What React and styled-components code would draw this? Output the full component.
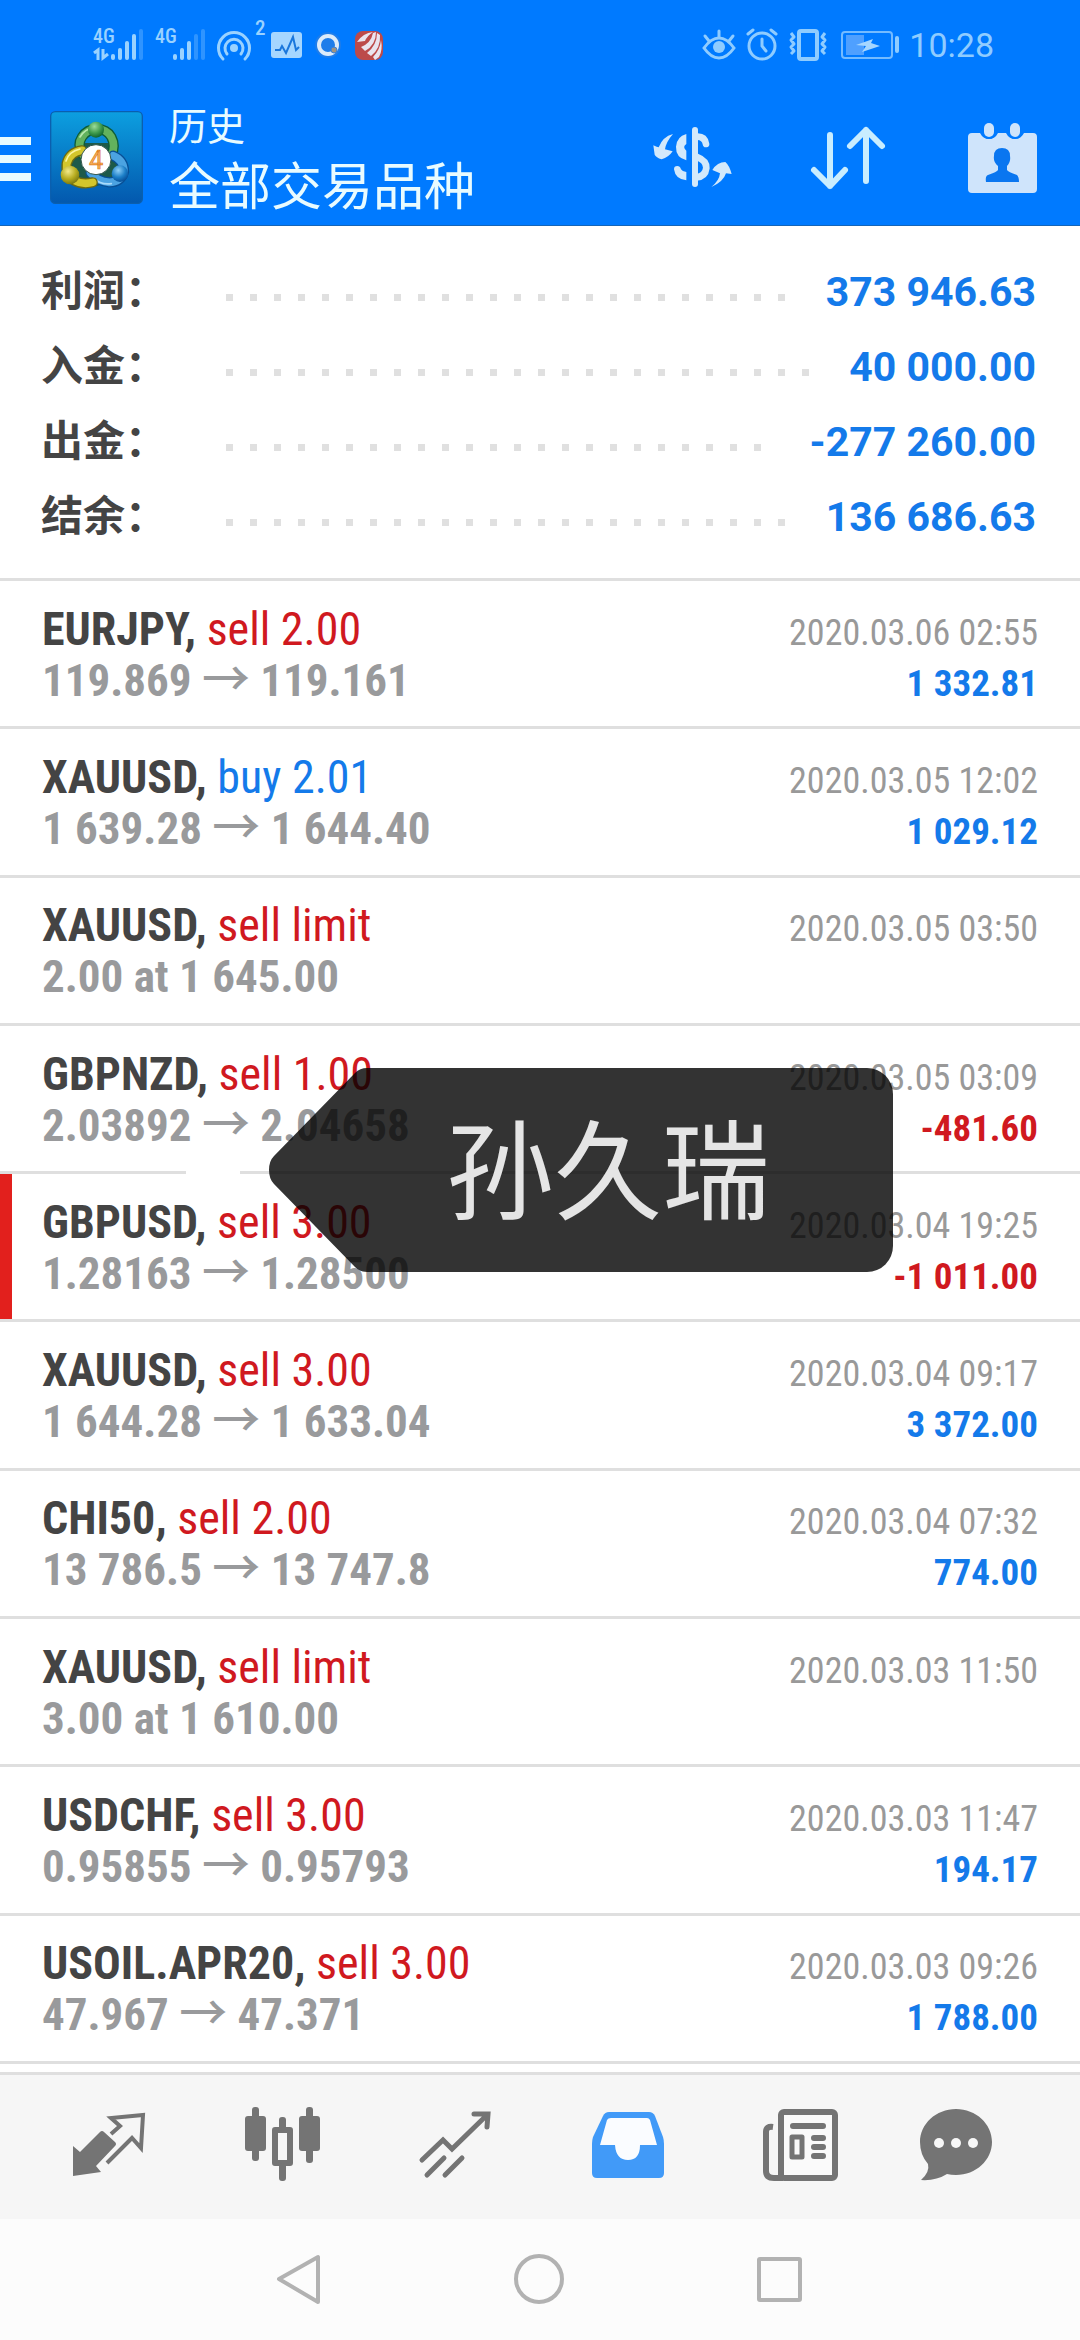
import styled, { createGlobalStyle } from "styled-components";

const totals = [
    { label: "利润：", value: "373 946.63" },
    { label: "入金：", value: "40 000.00" },
    { label: "出金：", value: "-277 260.00" },
    { label: "结余：", value: "136 686.63" },
];

const trades = [
    { id: 1, symbol: "EURJPY", side: "sell", volume: "2.00", open: "119.869", close: "119.161", time: "2020.03.06 02:55", profit: "1 332.81" },
    { id: 2, symbol: "XAUUSD", side: "buy", volume: "2.01", open: "1 639.28", close: "1 644.40", time: "2020.03.05 12:02", profit: "1 029.12" },
    { id: 3, symbol: "XAUUSD", side: "sell", volume: "limit", order: "2.00 at 1 645.00", time: "2020.03.05 03:50" },
    { id: 4, symbol: "GBPNZD", side: "sell", volume: "1.00", open: "2.03892", close: "2.04658", time: "2020.03.05 03:09", profit: "-481.60" },
    { id: 5, symbol: "GBPUSD", side: "sell", volume: "3.00", open: "1.28163", close: "1.28500", time: "2020.03.04 19:25", profit: "-1 011.00", marked: true, note: "孙久瑞" },
    { id: 6, symbol: "XAUUSD", side: "sell", volume: "3.00", open: "1 644.28", close: "1 633.04", time: "2020.03.04 09:17", profit: "3 372.00" },
    { id: 7, symbol: "CHI50", side: "sell", volume: "2.00", open: "13 786.5", close: "13 747.8", time: "2020.03.04 07:32", profit: "774.00" },
    { id: 8, symbol: "XAUUSD", side: "sell", volume: "limit", order: "3.00 at 1 610.00", time: "2020.03.03 11:50" },
    { id: 9, symbol: "USDCHF", side: "sell", volume: "3.00", open: "0.95855", close: "0.95793", time: "2020.03.03 11:47", profit: "194.17" },
    { id: 10, symbol: "USOIL.APR20", side: "sell", volume: "3.00", open: "47.967", close: "47.371", time: "2020.03.03 09:26", profit: "1 788.00" },
];

function App() {
    return (
        <>
        <GlobalStyle />
        <Screen>
            <Header>
                <StatusBar />
                <AppBar />
            </Header>
            <Main>
                <Totals>
                    {totals.map((item) => (
                        <TotalRow key={item.label}>
                            <TotalLabel>{item.label}</TotalLabel>
                            <Dots />
                            <TotalValue>{item.value}</TotalValue>
                        </TotalRow>
                    ))}
                </Totals>
                <TradeList>
                    {trades.map((trade) => (
                        <Trade key={trade.id} trade={trade} />
                    ))}
                </TradeList>
            </Main>
            <TabBar />
            <SystemBar />
        </Screen>
        </>
    )
}

export default App

function Trade({ trade }) {
    return (
        <TradeRow $marked={trade.marked}>
            <TradeLine>
                <Symbol>
                    {trade.symbol}, <Side $side={trade.side}>{trade.side} {trade.volume}</Side>
                </Symbol>
                <Time>{trade.time}</Time>
            </TradeLine>
            <TradeLine>
                <Prices>
                    {trade.order || <>{trade.open} <Arrow>→</Arrow> {trade.close}</>}
                </Prices>
                {trade.profit && (
                    <Profit $loss={trade.profit.startsWith("-")}>{trade.profit}</Profit>
                )}
            </TradeLine>
            {trade.note && (
                <Note>
                    <NoteTip viewBox="0 0 98 204" aria-hidden="true">
                        <path d="M98 0Q91 0 86 5L5 88Q0 93 0 102Q0 111 5 116L86 199Q91 204 98 204Z" />
                    </NoteTip>
                    <NoteText>{trade.note}</NoteText>
                </Note>
            )}
        </TradeRow>
    )
}

function SignalIcon({ level, data }) {
    const bars = [[18, 26], [25, 20], [32, 13], [39, 6], [46, 1]];
    return (
        <svg width="50" height="34" viewBox="0 0 50 34" aria-hidden="true">
            <IconText x="0" y="15" $size={20}>4G</IconText>
            {data && <path d="M1 25L5 22V32M10 21V30L15 26" stroke="#9ad2ff" strokeWidth="3" fill="none" />}
            {bars.map(([x, y], i) => (
                <rect key={x} x={x} y={y} width="4" height={32 - y} rx="2" fill="#9ad2ff" opacity={i < level ? 1 : 0.3} />
            ))}
        </svg>
    )
}

function StatusBar() {
    return (
        <Status>
            <StatusGroup $gap={12}>
                <SignalIcon level={4} data />
                <SignalIcon level={3} />
                <svg width="42" height="34" viewBox="0 0 42 34" aria-hidden="true">
                    <g fill="none" stroke="#9ad2ff" strokeWidth="3" strokeLinecap="round">
                        <path d="M6 31A15.500 15.500 0 1 1 28 31" />
                        <path d="M10 26A9 9 0 1 1 24 26" />
                    </g>
                    <circle cx="17" cy="20" r="4" fill="#9ad2ff" />
                    <path d="M17 24L13 32H21Z" fill="#007aff" />
                    <IconText x="38" y="7" $size={21}>2</IconText>
                </svg>
                <svg width="31" height="34" viewBox="0 0 31 34" aria-hidden="true">
                    <rect y="4" width="31" height="26" rx="3" fill="#a5d6ff" />
                    <path d="M4 22H9L11 18L15 25L22 9L25 22L28 19" fill="none" stroke="#1a77dc" strokeWidth="2" />
                </svg>
                <svg width="27" height="34" viewBox="0 0 27 34" aria-hidden="true">
                    <circle cx="14" cy="17" r="13" fill="#3b80d6" opacity=".5" />
                    <circle cx="14" cy="17" r="9" fill="none" stroke="#dcebfa" strokeWidth="4" />
                    <circle cx="20" cy="22" r="3" fill="#9c9484" stroke="#3b80d6" strokeWidth="1" />
                </svg>
                <svg width="30" height="34" viewBox="0 0 30 34" aria-hidden="true">
                    <rect x="2" y="3" width="28" height="29" rx="8" fill="#bc4a4a" />
                    <g fill="#e9e4ee">
                        <path d="M4 14Q10 5 20 4Q14 8 12 13Z" />
                        <path d="M8 19Q18 15 20 5L23 4Q23 17 12 23Z" />
                        <path d="M14 25Q24 17 24 5L27 7Q28 20 18 28Z" />
                        <path d="M20 29Q27 22 28 12Q30 22 26 29L22 32Z" />
                    </g>
                </svg>
            </StatusGroup>
            <StatusGroup $gap={10}>
                <svg width="35" height="34" viewBox="0 0 35 34" aria-hidden="true">
                    <g fill="none" stroke="#8fccff" strokeWidth="3" strokeLinecap="round">
                        <path d="M2 20Q9 10 17 10T32 20Q25 30 17 30T2 20Z" />
                        <path d="M17 9V3M7 13L3 8M27 13L31 8" />
                    </g>
                    <circle cx="17" cy="19" r="6" fill="#8fccff" />
                </svg>
                <svg width="32" height="34" viewBox="0 0 32 34" aria-hidden="true">
                    <g fill="none" stroke="#8fccff" strokeWidth="3" strokeLinecap="round">
                        <circle cx="15" cy="18" r="13" />
                        <path d="M15 11V18L19 23M1 6L6 2M29 6L24 2" />
                    </g>
                </svg>
                <svg width="40" height="34" viewBox="0 0 40 34" aria-hidden="true">
                    <g fill="none" stroke="#8fccff" strokeLinejoin="round">
                        <rect x="10" y="3" width="18" height="28" rx="2" strokeWidth="4" />
                        <path d="M2 5L5 9L2 12L5 16L2 19L5 23L2 26M36 5L33 9L36 12L33 16L36 19L33 23L36 26" strokeWidth="3" />
                    </g>
                </svg>
                <svg width="60" height="34" viewBox="0 0 60 34" aria-hidden="true">
                    <rect x="3" y="4" width="50" height="26" rx="3" fill="none" stroke="#74bbff" strokeWidth="2" />
                    <rect x="7" y="7" width="18" height="20" fill="#4fa0ff" />
                    <path d="M17 17L34 11L32 15L41 18L23 24L27 18Z" fill="#a5d6ff" />
                    <rect x="56" y="8" width="4" height="17" rx="2" fill="#8fccff" />
                </svg>
                <Clock>10:28</Clock>
            </StatusGroup>
        </Status>
    )
}

function LogoIcon() {
    return (
        <svg width="93" height="93" viewBox="0 0 279 279" aria-hidden="true">
            <defs>
                <linearGradient id="tile" x1="0" y1="0" x2="0" y2="1">
                    <stop offset="0" stopColor="#0c9fe0" />
                    <stop offset="1" stopColor="#0358ae" />
                </linearGradient>
                <radialGradient id="green" cx=".4" cy=".3" r=".7">
                    <stop offset="0" stopColor="#9ddc9a" />
                    <stop offset=".6" stopColor="#3f9b4d" />
                    <stop offset="1" stopColor="#12662f" />
                </radialGradient>
                <radialGradient id="yellow" cx=".4" cy=".3" r=".7">
                    <stop offset="0" stopColor="#f3ea8a" />
                    <stop offset=".6" stopColor="#b7ac1f" />
                    <stop offset="1" stopColor="#7b7a12" />
                </radialGradient>
                <radialGradient id="blue" cx=".4" cy=".3" r=".7">
                    <stop offset="0" stopColor="#8fd0f8" />
                    <stop offset=".6" stopColor="#1c7fc8" />
                    <stop offset="1" stopColor="#07509a" />
                </radialGradient>
            </defs>
            <rect x="2" y="2" width="275" height="275" rx="14" fill="url(#tile)" stroke="#0b5fae" strokeWidth="4" />
            <path d="M88 96L190 96L226 190L140 226L52 190Z" fill="#1d5a4a" />
            <g fill="none" strokeLinecap="round">
                <path d="M98 130Q80 102 96 78Q112 54 140 54Q170 54 184 78Q198 104 184 134" stroke="#0e5c38" strokeWidth="31" />
                <path d="M98 130Q80 102 96 78Q112 54 140 54Q170 54 184 78Q198 104 184 134" stroke="#63b25d" strokeWidth="23" />
                <path d="M90 78Q104 54 132 50" stroke="#b8e8ae" strokeWidth="5" />
                <path d="M190 134Q222 148 222 182Q212 214 178 214Q140 210 122 186" stroke="#084f95" strokeWidth="31" />
                <path d="M190 134Q222 148 222 182Q212 214 178 214Q140 210 122 186" stroke="#4ba3e2" strokeWidth="23" />
                <path d="M132 202Q152 222 184 218" stroke="#a8dafa" strokeWidth="5" />
                <path d="M96 118Q58 124 50 158Q46 190 72 208Q98 222 128 214" stroke="#6d6a10" strokeWidth="31" />
                <path d="M96 118Q58 124 50 158Q46 190 72 208Q98 222 128 214" stroke="#d3c62c" strokeWidth="23" />
                <path d="M48 150Q56 122 90 114" stroke="#fbf5a0" strokeWidth="5" />
            </g>
            <circle cx="138" cy="56" r="24" fill="url(#green)" />
            <circle cx="60" cy="192" r="28" fill="url(#yellow)" />
            <circle cx="210" cy="188" r="25" fill="url(#blue)" />
            <circle cx="138" cy="146" r="45" fill="#fff" stroke="#32564a" strokeWidth="3" />
            <LogoText x="138" y="173">4</LogoText>
        </svg>
    )
}

function AppBar() {
    return (
        <Bar>
            <MenuButton aria-label="menu">
                <svg width="31" height="46" viewBox="0 0 31 46" fill="#e8fbff">
                    <path d="M0 2H31V10H0ZM0 20H31V28H0ZM0 38H31V46H0Z" />
                </svg>
            </MenuButton>
            <LogoIcon />
            <Titles>
                <Caption>历史</Caption>
                <Title>全部交易品种</Title>
            </Titles>
            <BarButton aria-label="currency">
                <svg width="110" height="95" viewBox="-10 0 330 285">
                    <g fill="#d3e9fb">
                        <path d="M95 72Q74 96 71 118L94 124Q82 142 61 148Q44 142 40 134L36 106Q48 112 52 112Q64 80 95 72Z" />
                        <path d="M210 231Q234 212 236 190L213 180Q228 156 252 156Q264 166 271 192L254 190Q246 216 210 231Z" />
                        <path d="M135 72V102Q122 110 135 122V151Q103 142 104 110Q106 80 135 72Z" />
                        <path d="M98 178Q98 168 108 168Q116 168 119 178Q124 186 135 186V211Q102 208 98 178Z" />
                    </g>
                    <g fill="none" stroke="#d3e9fb" strokeLinecap="round">
                        <path d="M161 60V222" strokeWidth="18" />
                        <path d="M165 80Q190 78 194 102M165 140Q196 152 195 174Q192 200 165 202" strokeWidth="20" />
                    </g>
                </svg>
            </BarButton>
            <BarButton aria-label="sort">
                <svg width="74" height="64" viewBox="0 0 74 64" fill="none" stroke="#c9edff" strokeWidth="6" strokeLinecap="round" strokeLinejoin="round">
                    <path d="M19 9V60M3 44L19 60L34 44M55 55V4M39 20L55 4L71 20" />
                </svg>
            </BarButton>
            <BarButton aria-label="period">
                <svg width="69" height="72" viewBox="0 0 69 72">
                    <path d="M4 11H12Q15 17 21 17T30 11H38Q41 17 47 17T56 11H65Q69 11 69 15V67Q69 71 65 71H4Q0 71 0 67V15Q0 11 4 11Z" fill="#cfe4fb" />
                    <rect x="14" y="-1" width="14" height="18" rx="7" fill="#007aff" />
                    <rect x="40" y="-1" width="14" height="18" rx="7" fill="#007aff" />
                    <rect x="16" y="1" width="10" height="14" rx="5" fill="#cfe4fb" />
                    <rect x="42" y="1" width="10" height="14" rx="5" fill="#cfe4fb" />
                    <path d="M34 26Q42 26 42 34Q43 40 39 44V48Q40 50 49 53Q51 55 51 60H18Q17 54 20 53Q29 50 30 48V44Q25 40 26 34Q26 26 34 26Z" fill="#0a76f0" />
                </svg>
            </BarButton>
        </Bar>
    )
}

function TabBar() {
    return (
        <Tabs aria-label="sections">
            <Tab aria-label="quotes">
                <svg width="72" height="64" viewBox="0 0 72 64">
                    <path d="M0 33L7 39L27 19Q29 17 31 19L42 29Q44 31 42 33L23 53L28 59L0 63Z" fill="currentColor" />
                    <path d="M38 21L47 13L38 5L70 2L68 35L59 25L34 50" fill="none" stroke="currentColor" strokeWidth="4" />
                </svg>
            </Tab>
            <Tab aria-label="charts">
                <svg width="75" height="76" viewBox="0 0 75 76" fill="currentColor">
                    <rect y="9" width="21" height="35" rx="3" />
                    <rect x="7" width="7" height="54" rx="3" />
                    <path d="M30 20H45Q48 20 48 23V56Q48 59 45 59H30Q27 59 27 56V23Q27 20 30 20ZM33 26V53H42V26Z" />
                    <rect x="34" y="10" width="7" height="14" rx="3" />
                    <rect x="34" y="56" width="7" height="18" rx="3" />
                    <rect x="54" y="9" width="21" height="35" rx="3" />
                    <rect x="61" width="7" height="56" rx="3" />
                </svg>
            </Tab>
            <Tab aria-label="trade">
                <svg width="72" height="68" viewBox="0 0 72 68" fill="none" stroke="currentColor" strokeWidth="5" strokeLinecap="round">
                    <path d="M3 49L24 29L33 38L68 4M55 3H69L68 16M8 64L25 47M26 64L43 47" />
                </svg>
            </Tab>
            <Tab aria-label="history" aria-current="page">
                <svg width="72" height="66" viewBox="0 0 72 66">
                    <path d="M17 0H57Q61 0 63 4L71 25Q72 28 72 32V61Q72 66 67 66H5Q0 66 0 61V32Q0 28 1 25L11 4Q13 0 17 0Z" fill="currentColor" />
                    <path d="M19 6H55Q57 6 58 8L65 33H48Q48 48 36 48T23 33H8L15 8Q16 6 19 6Z" fill="#fafcff" />
                </svg>
            </Tab>
            <Tab aria-label="news">
                <svg width="75" height="72" viewBox="0 0 75 72">
                    <rect x="18" y="3" width="54" height="66" rx="3" fill="#fafafa" stroke="currentColor" strokeWidth="6" />
                    <path d="M10 18Q3 17 3 23V62Q3 69 11 69H20" fill="none" stroke="currentColor" strokeWidth="6" />
                    <rect x="29" y="28" width="10" height="20" fill="none" stroke="currentColor" strokeWidth="5" strokeLinejoin="round" />
                    <path d="M30 17H60M51 29H60M51 38H60M51 47H60" stroke="currentColor" strokeWidth="6" strokeLinecap="round" />
                </svg>
            </Tab>
            <Tab aria-label="chat">
                <svg width="72" height="72" viewBox="0 0 72 72">
                    <path d="M36 0C56 0 72 15 72 33S56 66 36 66Q31 66 27 65Q16 72 1 71Q10 63 8 55Q0 46 0 33C0 15 16 0 36 0Z" fill="currentColor" />
                    <g fill="#f7f7f7">
                        <circle cx="19" cy="34" r="5" />
                        <circle cx="36" cy="34" r="5" />
                        <circle cx="53" cy="34" r="5" />
                    </g>
                </svg>
            </Tab>
        </Tabs>
    )
}

function SystemBar() {
    return (
        <System>
            <SystemButton aria-label="back">
                <svg width="52" height="52" viewBox="0 0 52 52">
                    <path d="M44 3V48L5 25Z" />
                </svg>
            </SystemButton>
            <SystemButton aria-label="home">
                <svg width="52" height="52" viewBox="0 0 52 52">
                    <circle cx="25" cy="25" r="23" />
                </svg>
            </SystemButton>
            <SystemButton aria-label="recent">
                <svg width="52" height="52" viewBox="0 0 52 52">
                    <rect x="5" y="5" width="41" height="41" rx="1" />
                </svg>
            </SystemButton>
        </System>
    )
}

const GlobalStyle = createGlobalStyle`
    * {
        box-sizing: border-box;
    }

    body {
        margin: 0;
        background-color: #fdfdfd;
        font-family: Roboto, "Noto Sans CJK SC", sans-serif;
    }

    button {
        padding: 0;
        border: none;
        background: none;
        cursor: pointer;
    }

    svg {
        display: block;
        flex-shrink: 0;
        overflow: visible;
    }
`;

const Screen = styled.div`
    display: flex;
    flex-direction: column;
    min-height: 100vh;
`;

const Header = styled.header`
    background-color: #007aff;
    border-bottom: 1px solid #1565b8;
`;

const Status = styled.div`
    display: flex;
    align-items: center;
    justify-content: space-between;
    height: 90px;
    padding: 0 86px 0 93px;
`;

const StatusGroup = styled.div`
    display: flex;
    align-items: center;
    gap: ${(props) => props.$gap}px;
`;

const IconText = styled.text`
    font-family: "Roboto Condensed", sans-serif;
    font-size: ${(props) => props.$size}px;
    font-weight: 500;
    fill: #9ad2ff;
`;

const Clock = styled.span`
    font-size: 34px;
    color: #8fccff;
`;

const Bar = styled.div`
    display: flex;
    align-items: center;
    height: 135px;
`;

const MenuButton = styled.button`
    width: 50px;
`;

const Titles = styled.div`
    flex: 1;
    padding: 4px 0 0 26px;
    color: #e8fbff;
`;

const Caption = styled.p`
    margin: 0;
    font-size: 38px;
    font-weight: 400;
    line-height: 56px;
`;

const Title = styled.h1`
    margin: 0;
    font-size: 51px;
    font-weight: 400;
    line-height: 66px;
`;

const LogoText = styled.text`
    font-family: Roboto, sans-serif;
    font-size: 76px;
    font-weight: 400;
    text-anchor: middle;
    fill: #f7b25c;
    stroke: #e07d1f;
    stroke-width: 2px;
`;

const BarButton = styled.button`
    display: flex;
    align-items: center;
    justify-content: center;
    width: 155px;
    height: 100%;
`;

const Main = styled.main`
    display: flex;
    flex: 1;
    flex-direction: column;
    padding-bottom: 8px;
    background-color: #fff;
`;

const Totals = styled.dl`
    margin: 0;
    padding: 28px 44px 24px 41px;
`;

const TotalRow = styled.div`
    display: flex;
    align-items: baseline;
    height: 75px;
    line-height: 75px;
`;

const TotalLabel = styled.dt`
    width: 185px;
    font-size: 42px;
    font-weight: 700;
    color: #444;
`;

const Dots = styled.div`
    flex: 1;
    align-self: center;
    height: 7px;
    margin: 12px 40px 0 0;
    background: linear-gradient(to right, #e0e0e0 7px, transparent 7px) 0 0 / 24px 7px;
`;

const TotalValue = styled.dd`
    margin: 0;
    font-size: 41px;
    font-weight: 700;
    color: #147aea;
`;

const TradeList = styled.ul`
    display: flex;
    flex: 1;
    flex-direction: column;
    margin: 0;
    padding: 0;
    list-style: none;
    font-family: "Roboto Condensed", "Noto Sans CJK SC", sans-serif;
    border-bottom: 3px solid #dfdfdf;
`;

const TradeRow = styled.li`
    position: relative;
    display: flex;
    flex: 1;
    flex-direction: column;
    justify-content: center;
    padding: 2px 42px 0;
    border-top: 3px solid #dfdfdf;
    ${(props) => props.$marked && `
        &::before {
            content: "";
            position: absolute;
            top: 0;
            bottom: 0;
            left: 0;
            width: 12px;
            background-color: #e2201d;
        }

        &::after {
            content: "";
            position: absolute;
            top: -3px;
            left: 186px;
            width: 54px;
            height: 3px;
            background-color: #fff;
        }
    `}
`;

const TradeLine = styled.div`
    display: flex;
    align-items: baseline;
    justify-content: space-between;
    height: 51px;
    line-height: 51px;
    white-space: nowrap;
`;

const Symbol = styled.strong`
    font-size: 46px;
    font-weight: 700;
    color: #444;
`;

const Side = styled.span`
    font-weight: 400;
    color: ${(props) => (props.$side === "buy" ? "#147aea" : "#d0191f")};
`;

const Time = styled.time`
    font-size: 36px;
    color: #999;
`;

const Prices = styled.span`
    font-size: 45px;
    font-weight: 700;
    color: #999a9c;
`;

const Arrow = styled.span`
    font-size: 48px;
    font-weight: 500;
    line-height: 1;
`;

const Profit = styled.span`
    font-size: 37px;
    font-weight: 700;
    color: ${(props) => (props.$loss ? "#d0191f" : "#147aea")};
`;

const Note = styled.div`
    position: absolute;
    top: -106px;
    left: 269px;
    z-index: 1;
    display: flex;
    height: 204px;
`;

const NoteTip = styled.svg`
    width: 98px;
    height: 204px;
    fill: rgba(0, 0, 0, 0.8);
`;

const NoteText = styled.span`
    padding: 4px 123px 0 79px;
    border-radius: 0 26px 26px 0;
    background-color: rgba(0, 0, 0, 0.8);
    color: #e5e5e5;
    font-size: 108px;
    font-weight: 400;
    line-height: 204px;
`;

const Tabs = styled.nav`
    display: grid;
    grid-template-columns: repeat(5, 5fr) 4fr;
    height: 147px;
    padding: 0 55px 4px 23px;
    background-color: #f6f6f6;
    border-top: 3px solid #dfdfdf;
`;

const Tab = styled.button`
    display: flex;
    align-items: center;
    justify-content: center;
    color: #747474;

    &[aria-current="page"] {
        color: #419af8;
    }
`;

const System = styled.nav`
    display: flex;
    justify-content: center;
    height: 121px;
    background-color: #fcfcfc;
`;

const SystemButton = styled.button`
    display: flex;
    align-items: center;
    justify-content: center;
    width: 240px;

    svg {
        fill: none;
        stroke: #b2b2b2;
        stroke-width: 4px;
        stroke-linejoin: round;
    }
`;
